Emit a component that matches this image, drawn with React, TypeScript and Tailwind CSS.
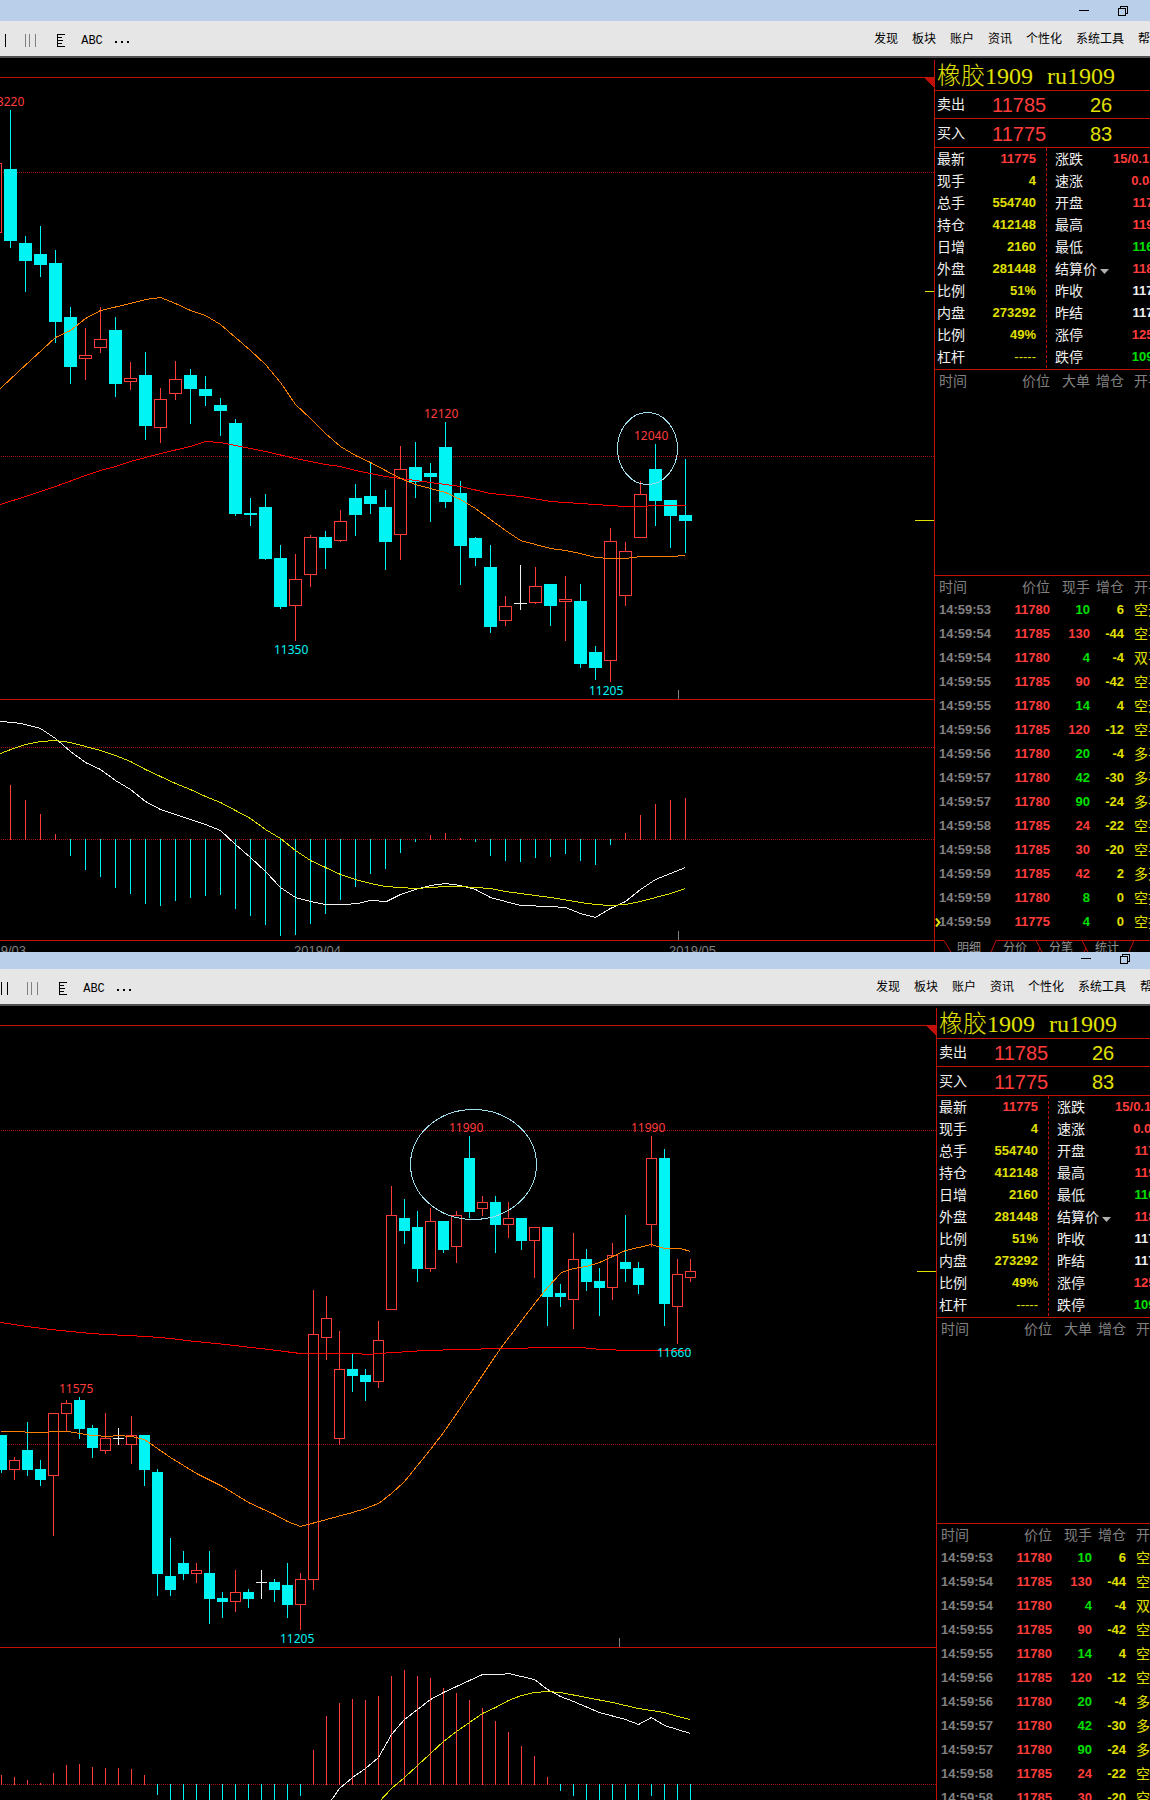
type Kind = 'up' | 'down' | 'flat'
// kind, high, body top, body bottom, low
type Candle = [Kind, number, number, number, number]
type Label = { text: string; x: number; y: number; up?: boolean }

type ChartData = {
  top: number
  macdTop: number
  macdHeight: number
  zero: number
  start: number
  step: number
  half: number
  grid: number[]
  macdGrid: number[]
  marks: { y: number; width: number }[]
  tick: number
  candles: Candle[]
  bars: number[]
  labels: Label[]
  ellipse: { cx: number; cy: number; rx: number; ry: number }
  fast: string
  slow: string
  dif: string
  dea: string
}

const COLORS: Record<Kind, string> = { up: '#ff3c3c', down: '#00f4f4', flat: '#f0f0f0' }

const daily: ChartData = {
  top: 77,
  macdTop: 699,
  macdHeight: 240,
  zero: 839,
  start: -5,
  step: 15,
  half: 6,
  grid: [172, 456],
  macdGrid: [747, 839],
  marks: [
    { y: 291, width: 9 },
    { y: 520, width: 19 },
  ],
  tick: 678,
  candles: [
    ['up', 163, 163, 233, 233],
    ['down', 110, 169, 241, 248], ['down', 236, 243, 261, 292], ['down', 226, 254, 265, 277],
    ['down', 250, 263, 322, 343], ['down', 307, 317, 367, 384], ['up', 328, 355, 359, 380],
    ['up', 307, 339, 348, 353], ['down', 317, 330, 384, 397], ['up', 362, 378, 382, 390],
    ['down', 352, 375, 426, 440], ['up', 388, 399, 428, 443], ['up', 361, 379, 394, 400],
    ['down', 369, 375, 389, 424], ['down', 376, 389, 396, 406], ['down', 398, 405, 411, 436],
    ['down', 419, 423, 514, 516], ['down', 498, 513, 515, 526], ['down', 494, 507, 559, 560],
    ['down', 545, 558, 607, 609], ['up', 554, 579, 606, 641], ['up', 535, 537, 575, 587],
    ['down', 531, 537, 548, 569], ['up', 510, 521, 541, 542], ['down', 484, 498, 515, 536],
    ['down', 463, 496, 504, 514], ['down', 490, 507, 542, 570], ['up', 446, 469, 535, 560],
    ['down', 442, 467, 482, 498], ['down', 463, 473, 477, 522], ['down', 422, 447, 502, 508],
    ['down', 481, 493, 546, 585], ['down', 537, 538, 558, 566], ['down', 545, 567, 627, 633],
    ['up', 596, 606, 621, 626], ['flat', 565, 603, 604, 610], ['up', 567, 586, 603, 604],
    ['down', 584, 584, 606, 626], ['up', 576, 599, 602, 641], ['down', 584, 601, 664, 668],
    ['down', 646, 652, 668, 680], ['up', 528, 541, 661, 682], ['up', 542, 551, 596, 606],
    ['up', 481, 494, 538, 538], ['down', 444, 469, 501, 526], ['down', 500, 500, 516, 548],
    ['down', 459, 515, 521, 553],
  ],
  bars: [
    780, 785, 800, 814, 834, 856, 870, 877, 888, 894, 904, 906, 901, 898, 896, 895, 909, 916, 925,
    936, 935, 924, 914, 900, 887, 874, 869, 853, 842, 835, 833, 838, 842, 856, 861, 862, 858, 857,
    854, 861, 865, 845, 833, 815, 804, 800, 798,
  ],
  labels: [
    { text: '13220', x: -10, y: 106, up: true },
    { text: '12120', x: 424, y: 418, up: true },
    { text: '12040', x: 634, y: 440, up: true },
    { text: '11350', x: 274, y: 654 },
    { text: '11205', x: 589, y: 695 },
  ],
  ellipse: { cx: 647, cy: 448, rx: 30, ry: 36 },
  fast: '0,388 18,371 55,337 70,330 85,318 100,310 130,303 145,299 160,297 175,303 190,310 205,315 220,324 235,337 250,350 265,364 280,382 295,404 310,418 325,433 340,446 355,455 370,462 385,470 400,478 415,484 430,488 445,492 460,499 475,508 490,519 505,530 520,540 535,544 550,548 565,550 580,553 595,557 610,558 625,558 640,556 655,556 670,556 685,555',
  slow: '0,504 25,496 55,486 85,475 100,470 115,466 130,461 160,453 190,446 205,441 220,442 235,445 265,451 295,458 325,464 340,466 355,470 385,476 400,478 430,482 460,486 490,493 520,496 550,501 580,503 610,505 625,506 640,506 655,505 685,505',
  dif: '0,721 13,722 25,724 40,728 55,738 70,751 85,762 100,769 115,780 130,789 145,801 160,809 175,814 190,819 205,824 220,830 235,844 250,857 265,871 280,887 295,897 310,901 325,904 345,904 357,903 370,900 386,901 400,894 415,889 430,885 445,883 460,885 475,889 490,897 505,901 520,905 550,906 565,907 580,913 595,917 610,908 625,901 640,889 655,879 670,873 685,867',
  dea: '0,753 13,748 25,744 40,741 55,740 70,742 85,746 100,750 115,755 130,761 145,769 160,776 175,783 190,789 205,796 220,802 235,810 250,818 265,829 280,838 295,850 310,860 325,867 340,874 355,879 370,883 385,886 400,887 415,888 430,887 445,886 460,886 475,887 490,888 505,891 520,893 550,897 580,902 595,904 610,905 625,904 640,901 655,897 670,893 685,888',
}

const hourly: ChartData = {
  top: 1025,
  macdTop: 1647,
  macdHeight: 152,
  zero: 1784,
  start: 1,
  step: 13,
  half: 5,
  grid: [1130, 1444],
  macdGrid: [1784],
  marks: [{ y: 1271, width: 19 }],
  tick: 619,
  candles: [
    ['down', 1435, 1435, 1470, 1473], ['up', 1457, 1460, 1470, 1480], ['down', 1422, 1450, 1470, 1476],
    ['down', 1460, 1469, 1480, 1486], ['up', 1413, 1413, 1476, 1536], ['up', 1400, 1403, 1414, 1431],
    ['down', 1397, 1400, 1429, 1439], ['down', 1425, 1428, 1448, 1458], ['up', 1413, 1438, 1451, 1454],
    ['flat', 1428, 1438, 1439, 1445], ['up', 1416, 1435, 1445, 1464], ['down', 1435, 1435, 1470, 1486],
    ['down', 1469, 1472, 1574, 1596], ['down', 1538, 1576, 1590, 1596], ['down', 1551, 1563, 1574, 1580],
    ['up', 1563, 1570, 1574, 1583], ['down', 1551, 1573, 1599, 1624], ['down', 1592, 1598, 1602, 1618],
    ['up', 1570, 1592, 1602, 1612], ['down', 1589, 1592, 1599, 1608], ['flat', 1570, 1582, 1583, 1599],
    ['down', 1579, 1582, 1590, 1602], ['down', 1563, 1585, 1605, 1618], ['up', 1573, 1579, 1605, 1630],
    ['up', 1290, 1334, 1580, 1590], ['up', 1296, 1318, 1338, 1360], ['up', 1331, 1369, 1439, 1445],
    ['down', 1354, 1369, 1376, 1392], ['down', 1369, 1375, 1382, 1401], ['up', 1321, 1340, 1382, 1388],
    ['up', 1186, 1215, 1310, 1310], ['down', 1199, 1218, 1231, 1244], ['down', 1211, 1227, 1269, 1282],
    ['up', 1208, 1221, 1269, 1272], ['down', 1221, 1221, 1250, 1253], ['up', 1211, 1215, 1247, 1263],
    ['down', 1136, 1158, 1212, 1218], ['up', 1196, 1202, 1209, 1216], ['down', 1196, 1202, 1225, 1253],
    ['up', 1202, 1218, 1225, 1238], ['down', 1218, 1218, 1241, 1250], ['up', 1227, 1227, 1241, 1278],
    ['down', 1227, 1227, 1297, 1326], ['down', 1284, 1293, 1297, 1307], ['up', 1233, 1259, 1300, 1329],
    ['down', 1249, 1259, 1282, 1291], ['down', 1268, 1281, 1288, 1316], ['up', 1243, 1255, 1288, 1300],
    ['down', 1215, 1262, 1269, 1282], ['down', 1262, 1268, 1285, 1294], ['up', 1136, 1158, 1225, 1247],
    ['down', 1149, 1158, 1304, 1326], ['up', 1259, 1274, 1307, 1344], ['up', 1259, 1271, 1278, 1282],
  ],
  bars: [
    1775, 1777, 1780, 1783, 1773, 1765, 1764, 1767, 1768, 1768, 1769, 1775, 1795, 1804, 1806, 1808,
    1812, 1812, 1812, 1810, 1808, 1806, 1802, 1796, 1750, 1716, 1703, 1699, 1700, 1696, 1676, 1670,
    1676, 1678, 1688, 1693, 1700, 1708, 1721, 1732, 1746, 1756, 1777, 1791, 1796, 1804, 1808, 1808,
    1806, 1804, 1796, 1804, 1808, 1808,
  ],
  labels: [
    { text: '11575', x: 59, y: 1393, up: true },
    { text: '11990', x: 449, y: 1132, up: true },
    { text: '11990', x: 631, y: 1132, up: true },
    { text: '11205', x: 280, y: 1643 },
    { text: '11660', x: 657, y: 1357 },
  ],
  ellipse: { cx: 473, cy: 1164, rx: 63, ry: 55 },
  fast: '0,1431 20,1431 28,1432 45,1432 53,1431 68,1431 79,1433 92,1435 108,1436 118,1435 131,1436 144,1439 157,1448 170,1457 196,1473 222,1486 248,1502 274,1514 287,1521 300,1526 326,1519 352,1512 365,1508 378,1503 391,1493 404,1481 417,1465 430,1449 443,1432 459,1409 500,1348 535,1302 547,1287 561,1272 573,1268 586,1266 599,1262 612,1256 625,1250 638,1247 651,1244 664,1248 680,1248 690,1251',
  slow: '0,1322 27,1326 50,1329 90,1333 125,1335 147,1336 170,1338 195,1341 225,1344 260,1348 300,1353 355,1353 368,1354 378,1353 394,1352 424,1350 462,1349 500,1348 555,1347 580,1347 600,1349 630,1350 690,1350',
  dif: '330,1801 339,1788 352,1777 365,1768 378,1757 391,1734 404,1719 417,1709 430,1699 443,1692 469,1680 482,1674 501,1674 508,1673 521,1676 534,1679 547,1689 560,1696 573,1701 599,1712 625,1719 638,1724 651,1717 664,1725 690,1733',
  dea: '379,1801 391,1788 404,1777 417,1765 430,1753 443,1741 456,1731 469,1722 482,1713 495,1707 508,1700 521,1695 534,1692 547,1691 560,1692 586,1697 612,1702 638,1708 664,1712 677,1716 690,1719',
}

const menu = ['发现', '板块', '账户', '资讯', '个性化', '系统工具', '帮助']

const R = 'text-[#ff3c3c]'
const G = 'text-[#00e000]'
const Y = 'text-[#e0e000]'
const W = 'text-[#f0f0f0]'

const quotesLeft = [
  ['最新', '11775', R],
  ['现手', '4', Y],
  ['总手', '554740', Y],
  ['持仓', '412148', Y],
  ['日增', '2160', Y],
  ['外盘', '281448', Y],
  ['比例', '51%', Y],
  ['内盘', '273292', Y],
  ['比例', '49%', Y],
  ['杠杆', '-----', `${Y} font-normal`],
]

const quotesRight = [
  ['涨跌', '15/0.13%', R],
  ['速涨', '0.04%', R],
  ['开盘', '11760', R],
  ['最高', '11900', R],
  ['最低', '11660', G],
  ['结算价', '11800', R],
  ['昨收', '11760', W],
  ['昨结', '11760', W],
  ['涨停', '12580', R],
  ['跌停', '10935', G],
]

// time, price, volume, volume colour, open interest change, type
const trades = [
  ['14:59:53', '11780', '10', G, '6', '空开'],
  ['14:59:54', '11785', '130', R, '-44', '空平'],
  ['14:59:54', '11780', '4', G, '-4', '双平'],
  ['14:59:55', '11785', '90', R, '-42', '空平'],
  ['14:59:55', '11780', '14', G, '4', '空开'],
  ['14:59:56', '11785', '120', R, '-12', '空平'],
  ['14:59:56', '11780', '20', G, '-4', '多平'],
  ['14:59:57', '11780', '42', G, '-30', '多平'],
  ['14:59:57', '11780', '90', G, '-24', '多平'],
  ['14:59:58', '11785', '24', R, '-22', '空平'],
  ['14:59:58', '11785', '30', R, '-20', '空平'],
  ['14:59:59', '11785', '42', R, '2', '多开'],
  ['14:59:59', '11780', '8', G, '0', '空换'],
  ['14:59:59', '11775', '4', G, '0', '空换'],
]

function Line({ points, color }: { points: string; color: string }) {
  return <polyline points={points} fill="none" stroke={color} transform="translate(0.5 0.5)" />
}

function Grid({ y }: { y: number }) {
  return <line x1="1" x2="100%" y1={y + 0.5} y2={y + 0.5} stroke="#a01414" strokeDasharray="1 1" />
}

function CandleShape({ x, half, candle }: { x: number; half: number; candle: Candle }) {
  const [kind, high, top, bottom, low] = candle
  const color = COLORS[kind]
  const width = half * 2 + 1
  return (
    <g fill={color}>
      <rect x={x} y={high} width="1" height={top - high} />
      <rect x={x} y={bottom} width="1" height={low - bottom} />
      {kind === 'up' ? (
        <rect x={x - half + 0.5} y={top + 0.5} width={width - 1} height={bottom - top - 1} fill="none" stroke={color} />
      ) : (
        <rect x={x - half} y={top} width={width} height={bottom - top} />
      )}
    </g>
  )
}

function Chart({ data, dates }: { data: ChartData; dates?: boolean }) {
  const { top, macdTop, macdHeight, zero, start, step, half, tick, ellipse } = data
  return (
    <div className="flex-1 min-w-0 overflow-hidden pt-[19px]">
      <div className="border-t border-[#c01008]">
        <svg className="block w-full" height={macdTop - top - 1} shapeRendering="crispEdges">
          <svg x="100%" overflow="visible">
            <path d="M-10 0H0V10z" fill="#c01008" />
          </svg>
          <g transform={`translate(0 ${-top - 1})`}>
            {data.grid.map((y) => <Grid key={y} y={y} />)}
            {data.candles.map((c, i) => (
              <CandleShape key={i} x={start + step * i} half={half} candle={c} />
            ))}
            <Line points={data.slow} color="#ff0000" />
            <Line points={data.fast} color="#ff8000" />
            <ellipse {...ellipse} fill="none" stroke="#a0dcec" transform="translate(0.5 0.5)" />
            {data.labels.map((l) => (
              <text key={l.text + l.x} x={l.x} y={l.y} fill={l.up ? '#ff3c3c' : '#00f4f4'} className="font-['Noto_Sans',sans-serif] text-[12px]">
                {l.text}
              </text>
            ))}
            <rect x={tick} y={macdTop - 9} width="1" height="9" fill="#808080" />
            {data.marks.map((m) => (
              <rect key={m.y} x="100%" y={m.y} width={m.width} height="1" fill="#e0e000" transform={`translate(${-m.width})`} />
            ))}
          </g>
        </svg>
      </div>
      <div className="border-t border-[#c01008]">
        <svg className="block w-full" height={macdHeight} shapeRendering="crispEdges">
          <g transform={`translate(0 ${-macdTop - 1})`}>
            {data.macdGrid.map((y) => <Grid key={y} y={y} />)}
            {data.bars.map((y, i) => (
              <rect
                key={i}
                x={start + step * i}
                y={Math.min(y, zero)}
                width="1"
                height={y < zero ? zero + 1 - y : y - zero}
                fill={y < zero ? COLORS.up : COLORS.down}
              />
            ))}
            <Line points={data.dif} color="#f0f0f0" />
            <Line points={data.dea} color="#e0e000" />
            {dates && <rect x={tick} y="931" width="1" height="9" fill="#808080" />}
          </g>
        </svg>
      </div>
      {dates && (
        <div className="border-t border-[#c01008]">
          <svg className="block w-full font-['Liberation_Sans',sans-serif] text-[13px]" height="11" fill="#808080">
            <text x="-21" y="14">2019/03</text>
            <text x="294" y="14">2019/04</text>
            <text x="669" y="14">2019/05</text>
          </svg>
        </div>
      )}
    </div>
  )
}

function QuoteTable({ rows, className }: { rows: string[][]; className: string }) {
  return (
    <table className={`shrink-0 ${className}`}>
      <tbody className="text-[13px] leading-[22px] font-bold">
        {rows.map(([name, value, color], i) => (
          <tr key={i} className="h-[22px]">
            <th scope="row" className="p-0 text-left text-[14px] font-normal whitespace-nowrap text-[#f0f0f0]">
              {name === '结算价' ? (
                <button type="button" className="flex items-center gap-[3px]">
                  {name}
                  <svg className="mt-1" width="9" height="5" fill="#b0b0b0"><path d="M0 0h9L4.5 5z" /></svg>
                </button>
              ) : (
                name
              )}
            </th>
            <td className={`p-0 text-right ${color}`}>{value}</td>
          </tr>
        ))}
      </tbody>
    </table>
  )
}

function TradeTable({ third, rows }: { third: string; rows: string[][] }) {
  return (
    <table className="w-[229px] table-fixed">
      <colgroup>
        <col className="w-[75px]" />
        <col className="w-[40px]" />
        <col className="w-[40px]" />
        <col className="w-[34px]" />
        <col className="w-[40px]" />
      </colgroup>
      <thead>
        <tr className="h-[21px] text-right text-[14px] leading-[21px] text-[#808080]">
          <th className="p-0 pl-1 text-left font-normal">时间</th>
          <th className="p-0 font-normal">价位</th>
          <th className="p-0 font-normal">{third}</th>
          <th className="p-0 font-normal">增仓</th>
          <th className="p-0 pl-2.5 text-left font-normal">开平</th>
        </tr>
      </thead>
      <tbody>
        {rows.map(([time, price, volume, color, change, type], i) => (
          <tr key={i} className="h-6 text-right text-[13px] leading-6 font-bold">
            <td className="relative p-0 pl-1 text-left text-[#808080]">
              {i === rows.length - 1 && (
                <svg className="absolute top-2 left-0" width="6" height="9" fill="none" stroke="#e0e000" strokeWidth="2">
                  <path d="M1 .5L4.5 4.5L1 8.5" />
                </svg>
              )}
              {time}
            </td>
            <td className="p-0 text-[#ff3c3c]">{price}</td>
            <td className={`p-0 ${color}`}>{volume}</td>
            <td className="p-0 text-[#e0e000]">{change}</td>
            <td className="p-0 pl-2.5 text-left text-[14px] font-normal text-[#e0e000]">{type}</td>
          </tr>
        ))}
      </tbody>
    </table>
  )
}

function DealRow({ name, price, volume, className }: { name: string; price: string; volume: string; className: string }) {
  return (
    <div className={`flex items-center border-t border-[#c01008] pl-0.5 text-xl ${className}`}>
      <span className="w-[55px] text-[14px] text-[#f0f0f0]">{name}</span>
      <span className="w-[98px] text-[#ff3c3c]">{price}</span>
      <span className="text-[#e0e000]">{volume}</span>
    </div>
  )
}

function Sidebar({ className }: { className: string }) {
  return (
    <aside className={`mt-0.5 shrink-0 overflow-hidden border-l border-[#c01008] ${className}`}>
      <h2 className="flex h-[30px] items-center gap-3.5 pt-px pl-0.5 font-['Liberation_Serif','Noto_Sans_CJK_SC',serif] text-2xl leading-[30px] font-light whitespace-nowrap text-[#e0e000]">
        <span>橡胶1909</span>
        <span>ru1909</span>
      </h2>
      <DealRow name="卖出" price="11785" volume="26" className="h-7 pt-px" />
      <DealRow name="买入" price="11775" volume="83" className="h-[29px] pt-0.5" />
      <div className="flex border-t border-[#c01008] pb-px">
        <div className="shrink-0 border-r border-dashed border-[#c01008] pr-2.5 pl-0.5">
          <QuoteTable rows={quotesLeft} className="w-[99px]" />
        </div>
        <QuoteTable rows={quotesRight} className="ml-2 w-[113px]" />
      </div>
      <div className="h-[206px] border-t border-[#c01008] pt-px">
        <TradeTable third="大单" rows={[]} />
      </div>
      <div className="border-t border-[#c01008] pt-px pb-1.5">
        <TradeTable third="现手" rows={trades} />
      </div>
      <div className="relative h-3 overflow-hidden">
        <svg className="absolute inset-0" width="260" height="12" fill="none" stroke="#c01008">
          <path d="M0 .5H9L16 12M56 12L61 .5H101L107 12M103 12L105 8M101 .5H147L153 12M149 12L151 8M147 .5H260M194 12L199 .5" />
        </svg>
        <nav className="flex gap-[22px] pl-[22px] text-[12px] leading-4 whitespace-nowrap text-[#909090]">
          {['明细', '分价', '分笔', '统计'].map((t) => (
            <button key={t} type="button">{t}</button>
          ))}
        </nav>
      </div>
    </aside>
  )
}

function WindowBar({ className }: { className: string }) {
  return (
    <div className={`flex items-end justify-end gap-[29px] bg-[#bad0ea] pb-[5px] ${className}`}>
      <button type="button" aria-label="最小化">
        <svg className="block" width="10" height="10" shapeRendering="crispEdges">
          <path d="M0 4.5H10" stroke="#000" />
        </svg>
      </button>
      <button type="button" aria-label="还原">
        <svg className="block" width="10" height="10" fill="none" stroke="#000" shapeRendering="crispEdges">
          <path d="M.5 2.5H7.5V9.5H.5zM2.5 2V.5H9.5V7.5H8" />
        </svg>
      </button>
    </div>
  )
}

function Toolbar({ icons, right }: { icons: string; right: string }) {
  return (
    <header className="flex h-[37px] items-center justify-between overflow-hidden border-b-2 border-[#505050] bg-[#e6e6e6] text-[12px] text-black">
      <div className={`flex shrink-0 items-center pt-1 ${icons}`}>
        <button type="button" aria-label="单线">
          <svg className="block" width="8" height="13" shapeRendering="crispEdges">
            <path d="M1.5 0V13M7.5 0V13" stroke="#000" />
          </svg>
        </button>
        <button type="button" aria-label="多线" className="ml-[19px]">
          <svg className="block" width="11" height="13" shapeRendering="crispEdges">
            <path d="M.5 0V13M4.5 0V13M10.5 0V13" stroke="#808080" />
          </svg>
        </button>
        <button type="button" aria-label="刻度" className="ml-[21px]">
          <svg className="block" width="8" height="13" shapeRendering="crispEdges">
            <path d="M.5 0V13M0 .5H8M0 3.5H5M0 6.5H6M0 9.5H5M0 12.5H8" stroke="#000" fill="none" />
          </svg>
        </button>
        <button type="button" className="ml-4 w-[22px] font-['Liberation_Mono',monospace] text-[12px]">ABC</button>
        <button type="button" aria-label="更多" className="ml-3">
          <svg className="block" width="14" height="8" shapeRendering="crispEdges">
            <path d="M0 5H2M6 5H8M12 5H14" stroke="#000" strokeWidth="2" />
          </svg>
        </button>
      </div>
      <nav className={`flex shrink-0 gap-3.5 whitespace-nowrap ${right}`}>
        {menu.map((m) => (
          <button key={m} type="button">{m}</button>
        ))}
      </nav>
    </header>
  )
}

export default function App() {
  return (
    <div className="overflow-hidden bg-black font-['Liberation_Sans','Noto_Sans_CJK_SC',sans-serif]">
      <section>
        <WindowBar className="h-[21px] pr-[22px]" />
        <Toolbar icons="-ml-0.5" right="-mr-3" />
        <div className="flex">
          <Chart data={daily} dates />
          <Sidebar className="w-[216px]" />
        </div>
      </section>
      <section>
        <WindowBar className="h-[17px] pr-5" />
        <Toolbar icons="" right="-mr-3.5" />
        <div className="flex max-h-[794px] overflow-hidden">
          <Chart data={hourly} />
          <Sidebar className="w-[214px]" />
        </div>
      </section>
    </div>
  )
}
